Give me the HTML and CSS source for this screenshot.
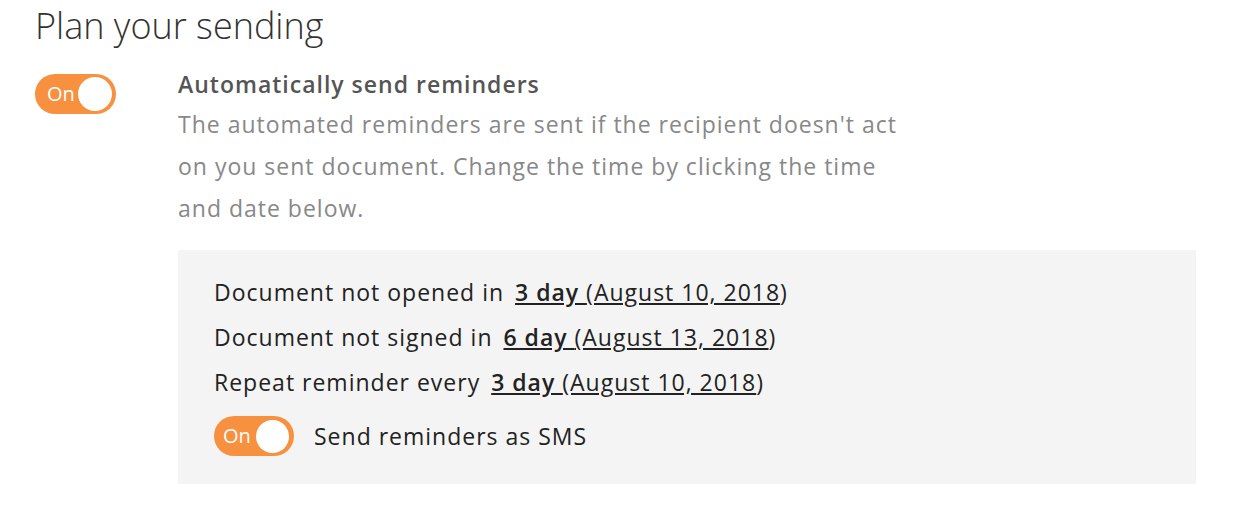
FILE: index.html
```html
<!DOCTYPE html>
<html>
<head>
<meta charset="utf-8">
<link rel="stylesheet" href="styles.css">
</head>
<body>
<div class="page">
  <h1 class="title">Plan your sending</h1>
  <div class="row">
    <div class="toggle toggle-main"><span class="toggle-label">On</span><span class="knob"></span></div>
    <div class="content">
      <h2 class="subtitle">Automatically send reminders</h2>
      <p class="desc">The automated reminders are sent if the recipient doesn't act on you sent document. Change the time by clicking the time and date below.</p>
      <div class="box">
        <div class="line">Document not opened in <span class="link"><b>3 day </b>(August 10, 2018</span>)</div>
        <div class="line">Document not signed in <span class="link"><b>6 day </b>(August 13, 2018</span>)</div>
        <div class="line">Repeat reminder every <span class="link"><b>3 day </b>(August 10, 2018</span>)</div>
        <div class="sms">
          <div class="toggle toggle-sms"><span class="toggle-label">On</span><span class="knob"></span></div>
          <span class="sms-label">Send reminders as SMS</span>
        </div>
      </div>
    </div>
  </div>
</div>
</body>
</html>
```
FILE: styles.css
```css
html, body {
  margin: 0;
  padding: 0;
  background: #ffffff;
}
body {
  font-family: "Open Sans", "Liberation Sans", sans-serif;
}
.page {
  padding: 0 35px;
}
.title {
  margin: 0;
  font-weight: 300;
  font-size: 36px;
  line-height: 52px;
  color: #333333;
}
.row {
  display: flex;
  align-items: flex-start;
  margin-top: 17px;
}
.toggle {
  box-sizing: border-box;
  width: 81px;
  height: 40px;
  border-radius: 20px;
  background: #f7913f;
  display: flex;
  align-items: center;
  justify-content: space-between;
  padding: 0 4px 0 12px;
  flex: none;
  letter-spacing: 0;
}
.toggle-main {
  margin-top: 5px;
}
.toggle-label {
  color: #ffffff;
  font-size: 20px;
  line-height: 1;
}
.knob {
  width: 34px;
  height: 34px;
  border-radius: 50%;
  background: #ffffff;
}
.content {
  margin-left: 62px;
  flex: 1;
  font-size: 23px;
  letter-spacing: 1px;
}
.subtitle {
  margin: 0;
  font-weight: 600;
  font-size: 23px;
  line-height: 30px;
  color: #555555;
}
.desc {
  margin: 4px 0 0;
  width: 740px;
  font-size: 23px;
  line-height: 42px;
  color: #888888;
}
.box {
  margin-top: 21px;
  width: 1018px;
  height: 234px;
  box-sizing: border-box;
  background: #f4f4f4;
  padding: 20px 36px;
  color: #222222;
}
.line {
  line-height: 45px;
}
.link {
  text-decoration: underline;
  margin-left: 4px;
}
.link b {
  font-weight: 600;
}
.sms {
  display: flex;
  align-items: center;
  margin-top: 11px;
}
.toggle-sms {
  width: 80px;
  padding: 0 5px 0 9px;
}
.toggle-sms .knob {
  width: 33px;
  height: 33px;
}
.sms-label {
  margin-left: 20px;
}
```
